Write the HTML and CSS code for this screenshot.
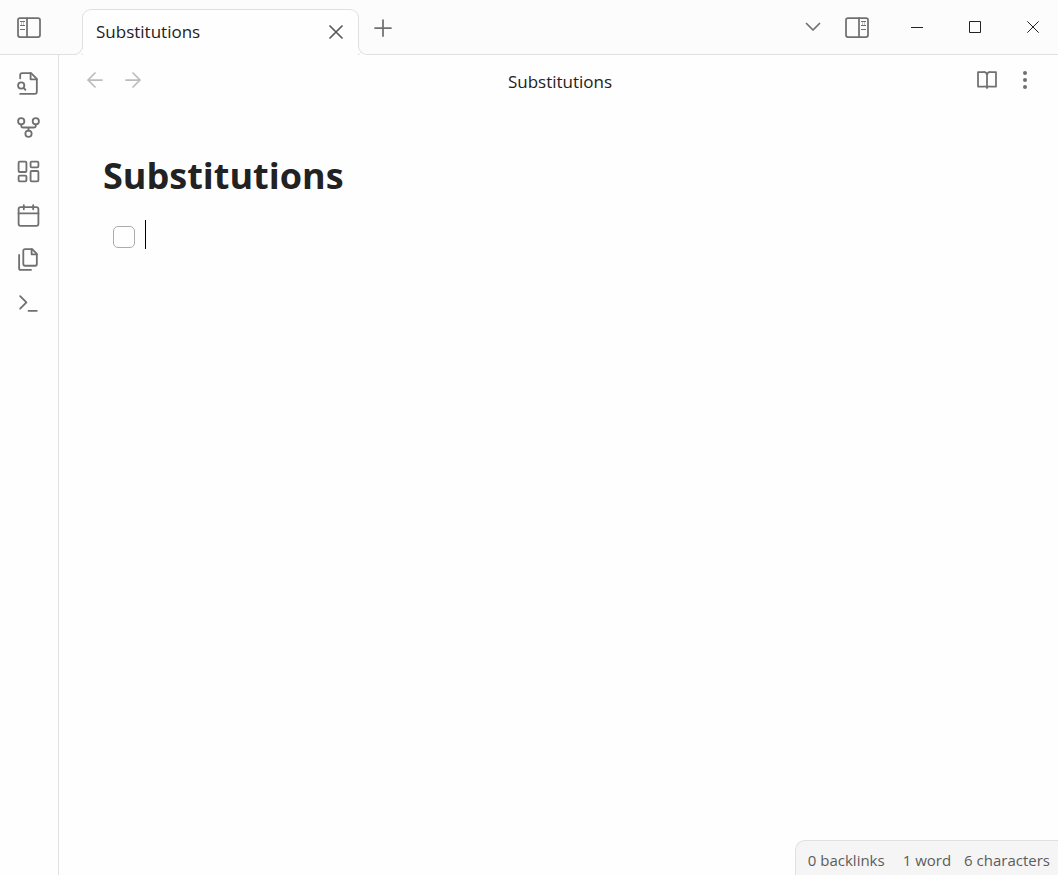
FILE: index.html
```html
<!DOCTYPE html>
<html lang="en">
<head>
<meta charset="utf-8">
<meta name="viewport" content="width=device-width, initial-scale=1">
<title>Substitutions</title>
<link rel="stylesheet" href="styles.css">
</head>
<body>
<div class="app">
  <header class="titlebar">
    <button class="icon-btn sidebar-toggle" aria-label="Toggle left sidebar">
      <svg class="panel-icon" viewBox="0 0 24 21"><rect x="1" y="1" width="22" height="19" rx="2"/><path d="M10 1v19"/><path class="thin" d="M3 4.500h5M3 8.500h5M3 12.500h5"/><path class="thin faint" d="M4.500 4.500v4M6.500 4.500v4"/></svg>
    </button>
    <div class="tab">
      <span class="tab-title">Substitutions</span>
      <button class="icon-btn tab-close" aria-label="Close tab">
        <svg viewBox="0 0 14 14"><path d="M1 1l12 12M13 1L1 13"/></svg>
      </button>
    </div>
    <button class="icon-btn new-tab" aria-label="New tab">
      <svg viewBox="0 0 18 18"><path d="M9 1v16M1 9h16"/></svg>
    </button>
    <div class="titlebar-tools">
      <button class="icon-btn tool" aria-label="Tab list">
        <svg class="chevron-icon" viewBox="0 0 16 10"><path d="M1.500 1.500L8 8l6.500-6.500"/></svg>
      </button>
      <button class="icon-btn tool" aria-label="Toggle right sidebar">
        <svg class="panel-icon" viewBox="0 0 24 21"><rect x="1" y="1" width="22" height="19" rx="2"/><path d="M14 1v19"/><path class="thin" d="M16 4.500h5M16 8.500h5M16 12.500h5"/><path class="thin faint" d="M17.500 4.500v4M19.500 4.500v4"/></svg>
      </button>
    </div>
    <div class="window-controls">
      <button class="icon-btn window-btn" aria-label="Minimize"><svg viewBox="0 0 12 12"><path d="M0 6.500h12"/></svg></button>
      <button class="icon-btn window-btn" aria-label="Maximize"><svg viewBox="0 0 12 12"><path d="M.5.5h11v11H.5z"/></svg></button>
      <button class="icon-btn window-btn" aria-label="Close"><svg viewBox="0 0 12 12"><path d="M.3.3l11.400 11.400M11.700.3L.3 11.700"/></svg></button>
    </div>
  </header>
  <div class="workspace">
    <nav class="ribbon" aria-label="Actions">
      <button class="icon-btn ribbon-btn" aria-label="Quick switcher"><svg viewBox="0 0 24 24"><path d="M4 22h14a2 2 0 0 0 2-2V7.500L14.500 2H6a2 2 0 0 0-2 2v3"/><path d="M14 2v6h6"/><circle cx="5" cy="14" r="3"/><path d="M9 18l-1.500-1.500"/></svg></button>
      <button class="icon-btn ribbon-btn" aria-label="Graph view"><svg viewBox="0 0 24 24"><circle cx="12" cy="18" r="3"/><circle cx="5" cy="6" r="3"/><circle cx="19" cy="6" r="3"/><path d="M19 9v1a2 2 0 0 1-2 2H7a2 2 0 0 1-2-2V9M12 12v3"/></svg></button>
      <button class="icon-btn ribbon-btn" aria-label="Canvas"><svg viewBox="0 0 24 24"><rect x="2.500" y="2.500" width="7.500" height="10" rx="1"/><rect x="14" y="2.500" width="7.500" height="5.500" rx="1"/><rect x="14" y="11.500" width="7.500" height="10" rx="1"/><rect x="2.500" y="16" width="7.500" height="5.500" rx="1"/></svg></button>
      <button class="icon-btn ribbon-btn" aria-label="Daily note"><svg viewBox="0 0 24 24"><rect x="2.500" y="4" width="19" height="18" rx="2"/><path d="M16.500 2v4M7.500 2v4M2.500 10h19"/></svg></button>
      <button class="icon-btn ribbon-btn" aria-label="Insert template"><svg viewBox="0 0 24 24"><path d="M15.500 2H8.600a1.600 1.600 0 0 0-1.600 1.600v12.800A1.600 1.600 0 0 0 8.600 18h9.800a1.600 1.600 0 0 0 1.600-1.600V6.500z"/><path d="M15 2v5h5"/><path d="M3 7.600v12.800A1.600 1.600 0 0 0 4.600 22h9.800"/></svg></button>
      <button class="icon-btn ribbon-btn" aria-label="Command palette"><svg viewBox="0 0 24 24"><path d="M4 17l6-6-6-6M12 19h8"/></svg></button>
    </nav>
    <main class="pane">
      <div class="view-header">
        <div class="view-group">
          <button class="icon-btn nav-btn" aria-label="Back"><svg viewBox="0 0 16 16"><path d="M15 8H1M8 1L1 8l7 7"/></svg></button>
          <button class="icon-btn nav-btn" aria-label="Forward"><svg viewBox="0 0 16 16"><path d="M1 8h14M8 1l7 7-7 7"/></svg></button>
        </div>
        <div class="view-title">Substitutions</div>
        <div class="view-group view-actions">
          <button class="icon-btn action-btn" aria-label="Reading view"><svg viewBox="0 0 20 18"><path d="M1 1h5.500A3.500 3.500 0 0 1 10 4v13a2.500 2.500 0 0 0-2.500-1.500H1zM19 1h-5.500A3.500 3.500 0 0 0 10 4v13a2.500 2.500 0 0 1 2.500-1.500H19z"/></svg></button>
          <button class="icon-btn action-btn" aria-label="More options"><svg class="dots-icon" viewBox="0 0 4 18"><circle cx="2" cy="2" r="2"/><circle cx="2" cy="9" r="2"/><circle cx="2" cy="16" r="2"/></svg></button>
        </div>
      </div>
      <article class="note">
        <h1 class="note-title">Substitutions</h1>
        <div class="task">
          <input class="task-check" type="checkbox" aria-label="Task">
          <span class="caret"></span>
        </div>
      </article>
      <footer class="status-bar">
        <span class="status-item backlinks">0 backlinks</span>
        <span class="status-item">1 word</span>
        <span class="status-item">6 characters</span>
      </footer>
    </main>
  </div>
</div>
</body>
</html>
```

FILE: styles.css
```css
:root {
  --bar: #fcfcfc;
  --page: #fefefe;
  --line: #e0e0e0;
  --icon: #707070;
  --text: #222222;
}

* {
  box-sizing: border-box;
}

body {
  margin: 0;
  background: var(--page);
  color: var(--text);
  font-family: "Segoe UI", "Open Sans", "Noto Sans", sans-serif;
  font-size: 17px;
}

.app {
  display: flex;
  flex-direction: column;
  min-height: 100vh;
}

.icon-btn {
  display: flex;
  align-items: center;
  justify-content: center;
  flex: none;
  padding: 0;
  border: 0;
  background: none;
  color: var(--icon);
}

svg {
  display: block;
  fill: none;
  stroke: currentColor;
  stroke-width: 1.75;
  stroke-linecap: round;
  stroke-linejoin: round;
}

.titlebar {
  display: flex;
  height: 55px;
  border-bottom: 1px solid var(--line);
  background: var(--bar);
}

.sidebar-toggle {
  width: 58px;
  margin-right: 24px;
}

.panel-icon {
  width: 24px;
  height: 21px;
}

.panel-icon .thin {
  stroke-width: 1;
  stroke-linecap: butt;
}

.panel-icon .faint {
  opacity: 0.4;
}

.tab {
  position: relative;
  display: flex;
  align-items: center;
  justify-content: space-between;
  width: 277px;
  margin: 9px 0 -1px;
  padding: 0 12px 2px 13px;
  border: 1px solid var(--line);
  border-bottom: 0;
  border-radius: 9px 9px 0 0;
  background: var(--page);
}

/* Outward curves that join the tab to the bar's bottom line. */
.tab::before,
.tab::after {
  content: "";
  position: absolute;
  bottom: 0;
  width: 9px;
  height: 9px;
  border: solid var(--line);
  background: radial-gradient(circle at 0 0, var(--bar) 9px, var(--page) 9px);
}

.tab::before {
  right: 100%;
  border-width: 0 1px 1px 0;
  border-radius: 0 0 9px 0;
  box-shadow: 1px 1px 0 1px var(--page);
  clip-path: inset(0 -1px 0 0);
}

.tab::after {
  left: 100%;
  border-width: 0 0 1px 1px;
  border-radius: 0 0 0 9px;
  background: var(--bar);
  box-shadow: -1px 1px 0 1px var(--page);
  clip-path: inset(0 0 0 -1px);
}

.tab-close {
  width: 20px;
  height: 20px;
  color: #5a5a5a;
}

.tab-close svg {
  width: 14px;
  height: 14px;
}

.new-tab {
  width: 48px;
  padding-top: 2px;
}

.new-tab svg {
  width: 18px;
  height: 18px;
}

.titlebar-tools {
  display: flex;
  margin-left: auto;
}

.tool {
  width: 44px;
}

.chevron-icon {
  width: 16px;
  height: 10px;
}

.window-controls {
  display: flex;
  gap: 12px;
  padding: 0 2px 0 15px;
}

.window-btn {
  width: 46px;
  color: var(--text);
}

.window-btn svg {
  width: 12px;
  height: 12px;
  stroke-width: 1;
  stroke-linecap: butt;
  stroke-linejoin: miter;
}

.workspace {
  display: flex;
  flex: 1;
}

.ribbon {
  display: flex;
  flex-direction: column;
  flex: none;
  gap: 10px;
  width: 59px;
  padding: 11px 2px 0 0;
  border-right: 1px solid var(--line);
  background: var(--page);
}

.ribbon-btn {
  height: 34px;
}

.ribbon-btn svg {
  width: 25px;
  height: 25px;
}

.pane {
  display: flex;
  flex: 1;
  flex-direction: column;
  min-width: 0;
}

.view-header {
  display: flex;
  align-items: center;
  justify-content: space-between;
  height: 50px;
  padding: 0 14px 0 17px;
}

.view-group {
  display: flex;
  flex: 1;
}

.view-title {
  padding-top: 2px;
}

.view-actions {
  justify-content: flex-end;
}

.nav-btn,
.action-btn {
  width: 38px;
  height: 32px;
}

.nav-btn {
  color: #bcbcbc;
}

.nav-btn svg {
  width: 16px;
  height: 16px;
}

.action-btn svg {
  width: 20px;
  height: 18px;
}

.action-btn .dots-icon {
  width: 4px;
  fill: currentColor;
  stroke: none;
}

.note {
  flex: 1;
  padding: 44px 44px 0;
}

.note-title {
  margin: 0;
  font-size: 36px;
  font-weight: 700;
  line-height: 54px;
}

.task {
  display: flex;
  align-items: center;
  gap: 10px;
  padding: 17px 10px;
}

.task-check {
  appearance: none;
  width: 22px;
  height: 22px;
  margin: 4px 0 0;
  border: 1px solid #ababab;
  border-radius: 5px;
  background: var(--page);
}

.caret {
  width: 1px;
  height: 29px;
  background: #000000;
}

.status-bar {
  display: flex;
  align-self: flex-end;
  gap: 13px;
  padding: 9px 8px 4px 12px;
  border: solid var(--line);
  border-width: 1px 0 0 1px;
  border-radius: 10px 0 0 0;
  background: #f5f5f5;
  color: #5c5c5c;
  font-size: 15px;
  line-height: 21px;
}

.backlinks {
  margin-right: 5px;
}
```
